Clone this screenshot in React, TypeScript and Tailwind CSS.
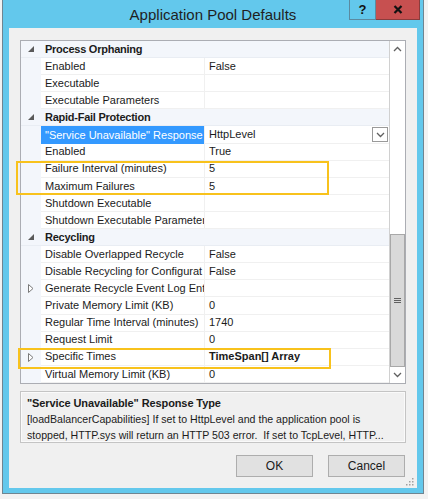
import type { ReactNode } from "react";

type Row =
  | { kind: "cat"; label: string }
  | { kind: "prop"; name: string; value?: string; bold?: boolean; expand?: boolean; selected?: boolean };

const rows: Row[] = [
  { kind: "cat", label: "Process Orphaning" },
  { kind: "prop", name: "Enabled", value: "False" },
  { kind: "prop", name: "Executable" },
  { kind: "prop", name: "Executable Parameters" },
  { kind: "cat", label: "Rapid-Fail Protection" },
  { kind: "prop", name: "\"Service Unavailable\" Response T", value: "HttpLevel", selected: true },
  { kind: "prop", name: "Enabled", value: "True" },
  { kind: "prop", name: "Failure Interval (minutes)", value: "5" },
  { kind: "prop", name: "Maximum Failures", value: "5" },
  { kind: "prop", name: "Shutdown Executable" },
  { kind: "prop", name: "Shutdown Executable Parameter" },
  { kind: "cat", label: "Recycling" },
  { kind: "prop", name: "Disable Overlapped Recycle", value: "False" },
  { kind: "prop", name: "Disable Recycling for Configurat", value: "False" },
  { kind: "prop", name: "Generate Recycle Event Log Entr", expand: true },
  { kind: "prop", name: "Private Memory Limit (KB)", value: "0" },
  { kind: "prop", name: "Regular Time Interval (minutes)", value: "1740" },
  { kind: "prop", name: "Request Limit", value: "0" },
  { kind: "prop", name: "Specific Times", value: "TimeSpan[] Array", bold: true, expand: true },
  { kind: "prop", name: "Virtual Memory Limit (KB)", value: "0" },
];

function Expanded() {
  return (
    <svg width="6" height="6" viewBox="0 0 6 6">
      <polygon points="6,0 6,6 0,6" fill="#5a5a5a" />
    </svg>
  );
}

function Collapsed() {
  return (
    <svg width="6" height="9" viewBox="0 0 6 9">
      <polygon points="0.5,0.5 5,4.5 0.5,8.5" fill="#fff" stroke="#7a7a7a" strokeWidth="1" />
    </svg>
  );
}

function Chevron({ up }: { up?: boolean }) {
  return (
    <svg width="9" height="6" viewBox="0 0 9 6">
      <polyline
        points={up ? "1,5 4.5,1.5 8,5" : "1,1 4.5,4.5 8,1"}
        fill="none"
        stroke="#606060"
        strokeWidth="1.3"
      />
    </svg>
  );
}

function GridRow({ row }: { row: Row }) {
  if (row.kind === "cat") {
    return (
      <div className="flex h-[17.1px] items-center bg-[#f3f6fb] border-b border-[#e9edf3]">
        <div className="w-[20px] flex justify-center items-center">
          <Expanded />
        </div>
        <div className="pl-[4px] font-bold tracking-[-0.25px]">{row.label}</div>
      </div>
    );
  }
  return (
    <div className="flex h-[17.1px]">
      <div className="w-[20px] shrink-0 bg-[#f3f6fb] flex justify-center items-center">
        {row.expand && <Collapsed />}
      </div>
      <div
        className={
          row.selected
            ? "w-[164px] shrink-0 bg-[#3399ff] text-white pl-[4px] flex items-center whitespace-nowrap overflow-hidden border-r border-[#f0f0f0]"
            : "w-[164px] shrink-0 pl-[4px] flex items-center whitespace-nowrap overflow-hidden border-r border-b border-[#f0f0f0]"
        }
      >
        {row.name}
      </div>
      <div className="flex-1 flex items-center pl-[4px] border-b border-[#f0f0f0] whitespace-nowrap overflow-hidden">
        <span className={row.bold ? "font-bold" : ""}>{row.value}</span>
        {row.selected && (
          <div className="ml-auto mr-[1px] w-[16px] h-[15px] bg-white border border-[#9a9a9a] flex items-center justify-center">
            <Chevron />
          </div>
        )}
      </div>
    </div>
  );
}

function Button({ children }: { children: ReactNode }) {
  return (
    <div className="w-[77px] h-[22px] bg-[#e1e1e1] border border-[#adadad] flex items-center justify-center text-[12px]">
      {children}
    </div>
  );
}

export default function App() {
  return (
    <div className="w-[428px] h-[499px] bg-[#f2f2f2] overflow-hidden relative font-['Liberation_Sans',Arial,sans-serif] text-[11px] text-[#1b1b1b]">
      <div className="ml-[2px] w-[422px] h-[494px] bg-[#63c8ec] border border-t-0 border-[#6f8591] flex flex-col px-[6px] pb-[5px]">
        <div className="h-[28px] shrink-0 grid grid-cols-[1fr_auto_1fr] -mx-[6px]">
          <div />
          <div className="text-[15px] text-[#1f1f1f] pt-[4px]">Application Pool Defaults</div>
          <div className="flex justify-end items-start pr-[3px]">
            <div className="w-[27px] h-[20px] border border-[#5b8aa0] border-t-0 flex items-center justify-center font-bold text-[13px] text-[#111]">
              ?
            </div>
            <div className="w-[44px] h-[20px] bg-[#c75050] border border-[#8a3c3c] border-t-0 border-l-0 flex items-center justify-center">
              <svg width="10" height="9" viewBox="0 0 10 9">
                <path d="M1.5 1 L8.5 8 M8.5 1 L1.5 8" stroke="#111" strokeWidth="2.2" />
              </svg>
            </div>
          </div>
        </div>

        <div className="flex-1 bg-[#f0f0f0] flex flex-col px-[11px] pt-[12px] relative">
          <div className="h-[344px] bg-white border border-[#abadb3] flex">
            <div className="flex-1 flex flex-col">
              {rows.map((r, i) => (
                <GridRow key={i} row={r} />
              ))}
            </div>
            <div className="w-[16px] flex flex-col border-l border-[#d0d0d0]">
              <div className="h-[16px] flex items-center justify-center">
                <Chevron up />
              </div>
              <div className="h-[177px]" />
              <div className="h-[133px] bg-[#d9d9d9] border border-[#a8a8a8] flex items-center justify-center">
                <div className="flex flex-col gap-[1px]">
                  <div className="w-[7px] h-[1px] bg-[#606060]" />
                  <div className="w-[7px] h-[1px] bg-[#606060]" />
                  <div className="w-[7px] h-[1px] bg-[#606060]" />
                </div>
              </div>
              <div className="flex-1 flex items-center justify-center">
                <Chevron />
              </div>
            </div>
          </div>

          <div className="mt-[7px] h-[52px] border border-[#c4c4c4] shadow-[inset_0_0_0_1px_#fafafa] bg-[#f0f0f0] px-[6px] pt-[3px] leading-[16px] text-[10.6px]">
            <div className="font-bold text-[11px] tracking-[-0.1px]">"Service Unavailable" Response Type</div>
            <div>[loadBalancerCapabilities] If set to HttpLevel and the application pool is</div>
            <div>stopped, HTTP.sys will return an HTTP 503 error.&nbsp; If set to TcpLevel, HTTP...</div>
          </div>

          <div className="mt-[12px] flex justify-end gap-[15px] pr-[1px]">
            <Button>OK</Button>
            <Button>Cancel</Button>
          </div>

          <svg className="absolute right-[3px] bottom-[2px]" width="10" height="10" viewBox="0 0 10 10">
            {[
              [8, 2],
              [8, 5],
              [5, 5],
              [8, 8],
              [5, 8],
              [2, 8],
            ].map(([x, y], i) => (
              <rect key={i} x={x} y={y} width="1.5" height="1.5" fill="#a0a0a0" />
            ))}
          </svg>

          <div className="absolute left-[7px] top-[133px] w-[313px] h-[34px] border-2 border-[#f8c21c]" />
          <div className="absolute left-[9px] top-[320px] w-[313px] h-[21px] border-2 border-[#f8c21c]" />
        </div>
      </div>
    </div>
  );
}
